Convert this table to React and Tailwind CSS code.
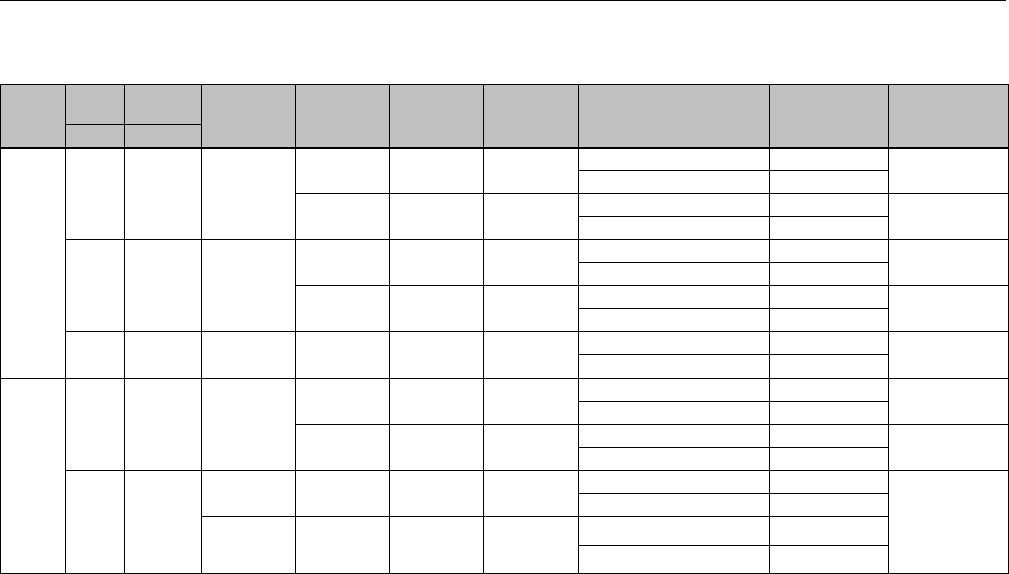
import React from "react";

const SPAN = {
  1: "",
  2: "row-span-2",
  4: "row-span-4",
  8: "row-span-8",
  10: "row-span-10",
};

// row-major list of body cells; each number is the row span of one cell
const bodyRows = [
  [10, 4, 4, 4, 2, 2, 2, 1, 1, 2],
  [1, 1],
  [2, 2, 2, 1, 1, 2],
  [1, 1],
  [4, 4, 4, 2, 2, 2, 1, 1, 2],
  [1, 1],
  [2, 2, 2, 1, 1, 2],
  [1, 1],
  [2, 2, 2, 2, 2, 2, 1, 1, 2],
  [1, 1],
  [8, 4, 4, 4, 2, 2, 2, 1, 1, 2],
  [1, 1],
  [2, 2, 2, 1, 1, 2],
  [1, 1],
  [4, 4, 2, 2, 2, 2, 1, 1, 4],
  [1, 1],
  [2, 2, 2, 2, 1, 1],
  [1, 1],
];

export default function App() {
  return (
    <div className="w-[1009px] h-[574px] bg-white overflow-hidden">
      <div className="h-px w-[1006px] bg-black" />

      <div className="mt-[83px] grid gap-px bg-black p-px grid-cols-[64px_58px_76px_93px_93px_93px_94px_190px_118px_119px] grid-rows-[39px_23px_21px_22px_22px_22px_22px_22px_22px_22px_22px_23px_22px_22px_22px_22px_22px_22px_28px_27px]">
        {/* header, first line */}
        <div className="row-span-2 bg-[#c0c0c0] border-b border-black" />
        <div className="bg-[#c0c0c0]" />
        <div className="bg-[#c0c0c0]" />
        <div className="row-span-2 bg-[#c0c0c0] border-b border-black" />
        <div className="row-span-2 bg-[#c0c0c0] border-b border-black" />
        <div className="row-span-2 bg-[#c0c0c0] border-b border-black" />
        <div className="row-span-2 bg-[#c0c0c0] border-b border-black" />
        <div className="row-span-2 bg-[#c0c0c0] border-b border-black" />
        <div className="row-span-2 bg-[#c0c0c0] border-b border-black" />
        <div className="row-span-2 bg-[#c0c0c0] border-b border-black" />
        {/* header, second line */}
        <div className="bg-[#c0c0c0] border-b border-black" />
        <div className="bg-[#c0c0c0] border-b border-black" />

        {bodyRows.map((row, i) =>
          row.map((span, j) => (
            <div key={`${i}-${j}`} className={`bg-white ${SPAN[span]}`} />
          ))
        )}
      </div>
    </div>
  );
}
